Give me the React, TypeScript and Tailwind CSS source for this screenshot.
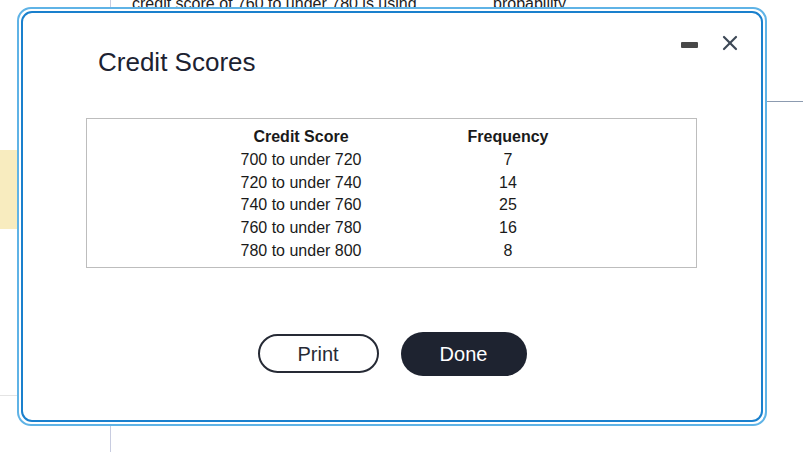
import { X } from "lucide-react";

const rows = [
    { range: "700 to under 720", freq: "7" },
    { range: "720 to under 740", freq: "14" },
    { range: "740 to under 760", freq: "25" },
    { range: "760 to under 780", freq: "16" },
    { range: "780 to under 800", freq: "8" },
];

export default function App() {
    return (
        <div className="relative w-[803px] h-[452px] overflow-hidden bg-white text-[#222] [font-family:'Liberation_Sans',Arial,sans-serif]">
            {/* page underneath the dialog */}
            <div className="flex h-full">
                <div className="w-[111px] h-full border-r border-[#c8cce0] flex flex-col">
                    <div className="mt-[150px] w-[17px] h-[79px] bg-[#f8ecbf]" />
                    <div className="mt-[166px] h-px bg-[#e4e4e4]" />
                </div>
                <div className="flex-1 flex flex-col">
                    <div className="-mt-[6px] pl-[21px] text-[16px] leading-[20px] whitespace-nowrap flex">
                        <span className="w-[361px]">credit score of 760 to under 780 is using</span>
                        <span>probability</span>
                    </div>
                    <div className="mt-[87px] h-px bg-[#8c9bb0]" />
                </div>
            </div>

            {/* dialog */}
            <div className="absolute left-[17px] top-[7px] w-[750px] h-[419px] rounded-[14px] border-2 border-[#5fb3e6] bg-white p-[2px]">
                <div className="h-full rounded-[11px] border-2 border-[#1a80cd] bg-white flex flex-col">
                    <div className="flex justify-between">
                        <h2 className="pl-[75px] pt-[34px] text-[26px] leading-[30px] text-[#1c2231]">Credit Scores</h2>
                        <div className="flex items-start gap-[23px] pt-[21px] pr-[22px]">
                            <button className="mt-[8px] w-[17px] h-[6px] rounded-[1px] bg-[#484848]" title="Minimize" />
                            <button className="w-[18px] h-[18px] flex items-center justify-center text-[#3d4856]" title="Close">
                                <X className="w-[24px] h-[24px] shrink-0" strokeWidth={2.2} />
                            </button>
                        </div>
                    </div>

                    <div className="mt-[41px] mx-[63px] mr-[64px] border border-[#bdbdbd] pt-[7px] pb-[4px] pl-[113px]">
                        <div className="grid grid-cols-[202px_212px] text-[16px] leading-[22.8px] text-center text-[#1a1a1a]">
                            <div className="font-bold">Credit Score</div>
                            <div className="font-bold">Frequency</div>
                            {rows.map((r) => (
                                <div key={r.range} className="contents">
                                    <div>{r.range}</div>
                                    <div>{r.freq}</div>
                                </div>
                            ))}
                        </div>
                    </div>

                    <div className="mt-[64px] flex items-center justify-center gap-[22px]">
                        <button className="w-[121px] h-[39px] rounded-full border-2 border-[#262a35] text-[20px] text-[#262a35]">
                            Print
                        </button>
                        <button className="w-[126px] h-[44px] rounded-full bg-[#1e2330] text-[20px] text-white">
                            Done
                        </button>
                    </div>
                </div>
            </div>
        </div>
    );
}
